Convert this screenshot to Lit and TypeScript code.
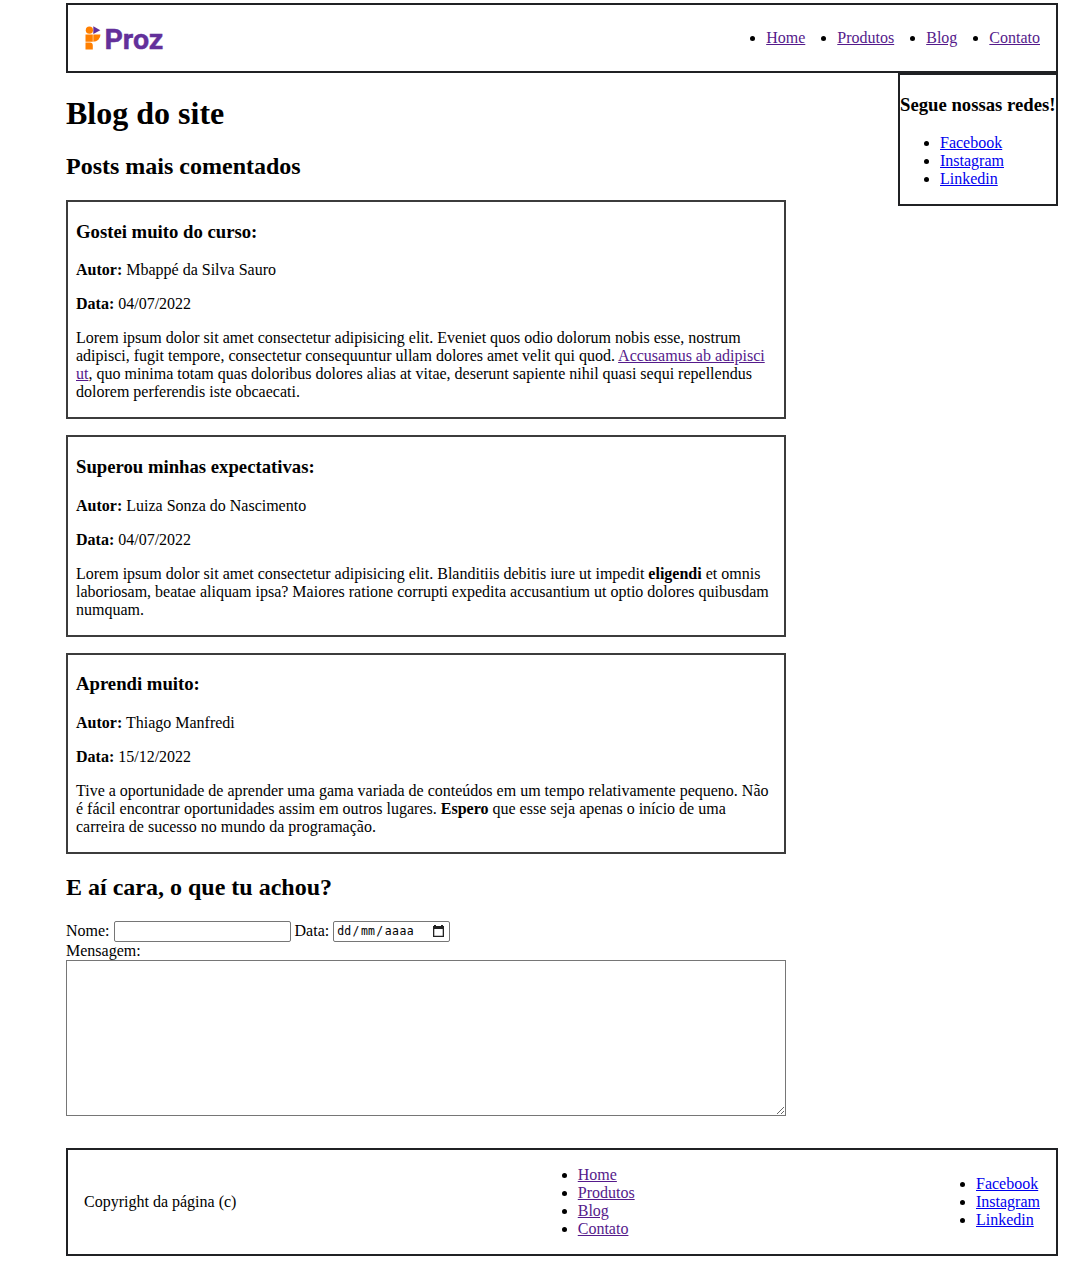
import { LitElement, html, css } from "lit";
import { customElement } from "lit/decorators.js";

const PAGES = ["Home", "Produtos", "Blog", "Contato"];
const NETWORKS = ["Facebook", "Instagram", "Linkedin"];

const POSTS = [
  {
    title: "Gostei muito do curso:",
    author: "Mbappé da Silva Sauro",
    date: "04/07/2022",
    body: html`<span class="ln">Lorem ipsum dolor sit amet consectetur adipisicing elit. Eveniet quos odio dolorum nobis esse, nostrum</span> <span class="ln">adipisci, fugit tempore, consectetur consequuntur ullam dolores amet velit qui quod. <a class="visited" href="#">Accusamus ab adipisci</a></span> <span class="ln"><a class="visited" href="#">ut</a>, quo minima totam quas doloribus dolores alias at vitae, deserunt sapiente nihil quasi sequi repellendus</span> <span class="ln">dolorem perferendis iste obcaecati.</span>`,
  },
  {
    title: "Superou minhas expectativas:",
    author: "Luiza Sonza do Nascimento",
    date: "04/07/2022",
    body: html`<span class="ln">Lorem ipsum dolor sit amet consectetur adipisicing elit. Blanditiis debitis iure ut impedit <b>eligendi</b> et omnis</span> <span class="ln">laboriosam, beatae aliquam ipsa? Maiores ratione corrupti expedita accusantium ut optio dolores quibusdam</span> <span class="ln">numquam.</span>`,
  },
  {
    title: "Aprendi muito:",
    author: "Thiago Manfredi",
    date: "15/12/2022",
    body: html`<span class="ln">Tive a oportunidade de aprender uma gama variada de conteúdos em um tempo relativamente pequeno. Não</span> <span class="ln">é fácil encontrar oportunidades assim em outros lugares. <b>Espero</b> que esse seja apenas o início de uma</span> <span class="ln">carreira de sucesso no mundo da programação.</span>`,
  },
];

@customElement("app-root")
export class AppRoot extends LitElement {
  static styles = css`
    :host { display: block; box-sizing: border-box; height: 1264px; padding: 3px 30px 0 66px; background: #fff; color: #000; font: 16px/18px "Liberation Serif", "Times New Roman", serif; }
    * { box-sizing: border-box; }
    h1 { margin: 21.44px 0; font-size: 32px; line-height: 38px; }
    h2 { margin: 19.92px 0; font-size: 24px; line-height: 27px; }
    h1 + h2 { margin-top: -1px; }
    h3 { margin: 18.72px 0; font-size: 18.72px; line-height: 22px; }
    p { margin: 16px 0; }
    ul { margin: 16px 0; padding: 0 0 0 40px; }
    a { color: #0000ee; }
    a.visited { color: #551a8b; }
    .bar { display: flex; justify-content: space-between; align-items: center; border: 2px solid #202124; padding: 0 16px; }
    .header { height: 70px; }
    .logo { display: block; overflow: visible; }
    .menu { display: flex; gap: 32px; }
    .content { display: flex; justify-content: space-between; align-items: flex-start; }
    .main { width: 720px; }
    .post { border: 2px solid #3c3c3c; padding: 0 8px; margin-bottom: 16px; display: flow-root; }
    .ln { display: block; white-space: nowrap; }
    .aside { width: 160px; height: 133px; border: 2px solid #202124; display: flow-root; white-space: nowrap; }
    .row { display: flex; align-items: center; height: 21px; }
    .name { width: 177px; height: 21px; margin: 0 4px 0 4px; border: 1px solid #767676; border-radius: 2px; padding: 1px 2px; }
    .date { width: 117px; height: 21px; margin-left: 4px; border: 1px solid #767676; border-radius: 2px; display: flex; align-items: center; justify-content: space-between; padding: 1px 4px 0 3px; font: 11.5px/15px "DejaVu Sans Mono", monospace; }
    .digits { display: flex; gap: 1.5px; }
    .year { letter-spacing: 0.4px; }
    .message { display: block; width: 720px; height: 156px; margin: 0; border: 1px solid #767676; border-radius: 0; }
    .footer { height: 108px; margin-top: 32px; }
  `;

  private links(names: string[], cls = "") {
    return names.map((n) => html`<li><a class=${cls} href="#">${n}</a></li>`);
  }

  render() {
    return html`
      <header class="bar header">
        <svg class="logo" width="90" height="32" viewBox="0 0 90 32">
          <circle cx="5.400" cy="8.200" r="3.600" fill="#ff7f00" />
          <path d="M9.300 4.300l7 3.900-7 3.900z" fill="#63309a" />
          <path d="M1.500 12.600h7.300v7.200H1.500zM9.300 12.600h7.200a7.200 7.200 0 0 1-7.200 7.200zM1.500 20.400h4.300a3 3 0 0 1 3 3v4.100H1.500z" fill="#ff7f00" />
          <text x="20.400" y="27" font-family="Roboto" font-weight="700" font-size="28.500" textLength="59" lengthAdjust="spacingAndGlyphs" fill="#63309a" stroke="#63309a" stroke-width="0.400">Proz</text>
        </svg>
        <ul class="menu">${this.links(PAGES, "visited")}</ul>
      </header>
      <div class="content">
        <main class="main">
          <h1>Blog do site</h1>
          <h2>Posts mais comentados</h2>
          ${POSTS.map((p) => html`<article class="post">
            <h3>${p.title}</h3>
            <p><b>Autor:</b> ${p.author}</p>
            <p><b>Data:</b> ${p.date}</p>
            <p>${p.body}</p>
          </article>`)}
          <h2>E aí cara, o que tu achou?</h2>
          <div class="row">
            <label for="n">Nome:</label><input id="n" class="name" />
            <span>Data:</span>
            <span class="date"><span class="digits"><span>dd</span><span>/</span><span>mm</span><span>/</span><span class="year">aaaa</span></span>
              <svg width="13" height="13" viewBox="0 0 13 13"><path d="M1 1h1V0h2v1h5V0h2v1h1v11H1zM2.300 4v6.700h8.400V4z" fill="#222" fill-rule="evenodd" /></svg>
            </span>
          </div>
          <label for="m">Mensagem:</label>
          <textarea id="m" class="message"></textarea>
        </main>
        <aside class="aside">
          <h3>Segue nossas redes!</h3>
          <ul>${this.links(NETWORKS)}</ul>
        </aside>
      </div>
      <footer class="bar footer">
        <span>Copyright da página (c)</span>
        <ul>${this.links(PAGES, "visited")}</ul>
        <ul>${this.links(NETWORKS)}</ul>
      </footer>
    `;
  }
}
